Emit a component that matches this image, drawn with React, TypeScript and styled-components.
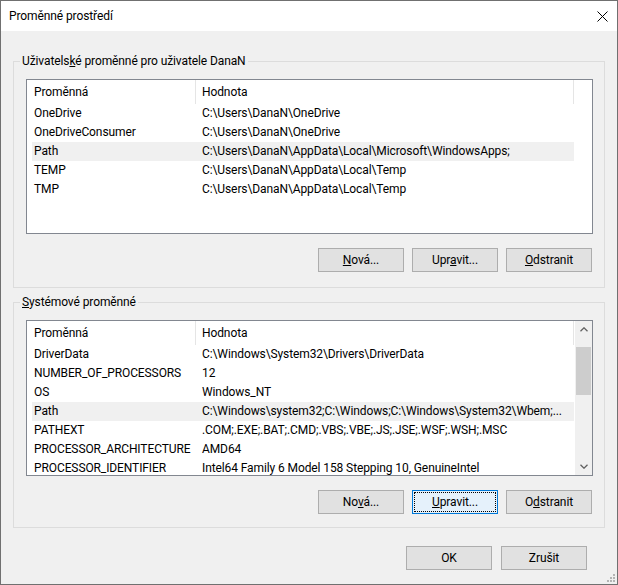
import React from 'react';
import styled, { createGlobalStyle, css } from 'styled-components';

interface EnvVar {
  name: string;
  value: string;
  selected?: boolean;
}

const userVars: EnvVar[] = [
  { name: 'OneDrive', value: 'C:\\Users\\DanaN\\OneDrive' },
  { name: 'OneDriveConsumer', value: 'C:\\Users\\DanaN\\OneDrive' },
  { name: 'Path', value: 'C:\\Users\\DanaN\\AppData\\Local\\Microsoft\\WindowsApps;', selected: true },
  { name: 'TEMP', value: 'C:\\Users\\DanaN\\AppData\\Local\\Temp' },
  { name: 'TMP', value: 'C:\\Users\\DanaN\\AppData\\Local\\Temp' },
];

const systemVars: EnvVar[] = [
  { name: 'DriverData', value: 'C:\\Windows\\System32\\Drivers\\DriverData' },
  { name: 'NUMBER_OF_PROCESSORS', value: '12' },
  { name: 'OS', value: 'Windows_NT' },
  { name: 'Path', value: 'C:\\Windows\\system32;C:\\Windows;C:\\Windows\\System32\\Wbem;...', selected: true },
  { name: 'PATHEXT', value: '.COM;.EXE;.BAT;.CMD;.VBS;.VBE;.JS;.JSE;.WSF;.WSH;.MSC' },
  { name: 'PROCESSOR_ARCHITECTURE', value: 'AMD64' },
  { name: 'PROCESSOR_IDENTIFIER', value: 'Intel64 Family 6 Model 158 Stepping 10, GenuineIntel' },
];

const GlobalStyle = createGlobalStyle`
  * { box-sizing: border-box; }
  html, body {
    margin: 0;
    padding: 0;
    background: #fff;
  }
  body {
    font-family: Roboto, "Liberation Sans", sans-serif;
    font-size: 12px;
    letter-spacing: -0.1px;
    color: #000;
  }
`;

const Window = styled.div`
  position: relative;
  width: 618px;
  height: 585px;
  border: 1px solid #707070;
  background: #f0f0f0;
  display: flex;
  flex-direction: column;
`;

const TitleBar = styled.div`
  flex: none;
  height: 30px;
  background: #fff;
  display: flex;
  align-items: center;
  justify-content: space-between;
  padding: 0 9px 0 8px;
`;

const Caption = styled.span`
  line-height: 16px;
`;

const Content = styled.div`
  flex: 1;
  display: flex;
  flex-direction: column;
  padding: 22px 12px 14px;
`;

const Group = styled.fieldset<{ $padBottom: number }>`
  margin: 0;
  min-width: 0;
  border: 1px solid #dcdcdc;
  padding: 10px 11px ${({ $padBottom }) => $padBottom}px 12px;

  & + & {
    margin-top: 6px;
  }
`;

const Legend = styled.legend`
  padding: 0 2px;
  margin-left: -6px;
  line-height: 16px;
`;

const ListView = styled.div<{ $height: number }>`
  height: ${({ $height }) => $height}px;
  background: #fff;
  border: 1px solid #828790;
  display: flex;
  overflow: hidden;
`;

const ListBody = styled.div`
  flex: 1;
  min-width: 0;
  overflow: hidden;
`;

const Header = styled.div`
  display: grid;
  grid-template-columns: 169px 378px;
  height: 24px;
`;

const HeaderCell = styled.div<{ $pad: number }>`
  padding-left: ${({ $pad }) => $pad}px;
  line-height: 24px;
  border-right: 1px solid #e5e5e5;
  white-space: nowrap;
`;

const Row = styled.div<{ $selected?: boolean }>`
  display: grid;
  grid-template-columns: 164px 378px;
  width: 542px;
  height: 19px;
  margin-left: 5px;
  line-height: 19px;
  background: ${({ $selected }) => ($selected ? '#f0f0f0' : 'transparent')};
`;

const Cell = styled.div<{ $pad: number }>`
  padding: 0 4px 0 ${({ $pad }) => $pad}px;
  white-space: nowrap;
  overflow: hidden;
  text-overflow: ellipsis;
`;

const ScrollBar = styled.div`
  flex: none;
  width: 17px;
  background: #f0f0f0;
  display: flex;
  flex-direction: column;
`;

const ScrollArrow = styled.div`
  flex: none;
  height: 17px;
  display: flex;
  align-items: center;
  justify-content: center;
`;

const ScrollTrack = styled.div`
  flex: 1;
  padding: 9px 1px 0;
`;

const ScrollThumb = styled.div`
  height: 48px;
  background: #cdcdcd;
`;

const ButtonRow = styled.div<{ $top: number; $gap: number; $right: number }>`
  display: flex;
  justify-content: flex-end;
  gap: ${({ $gap }) => $gap}px;
  margin-top: ${({ $top }) => $top}px;
  padding-right: ${({ $right }) => $right}px;
`;

const Button = styled.button<{ $focused?: boolean }>`
  position: relative;
  width: 86px;
  height: 24px;
  margin: 0;
  padding: 0;
  font: inherit;
  letter-spacing: inherit;
  color: #000;
  background: #e1e1e1;
  border: 1px solid #adadad;
  border-radius: 0;

  ${({ $focused }) =>
    $focused &&
    css`
      background: #e5f1fb;
      border-color: #0078d7;

      &::after {
        content: '';
        position: absolute;
        inset: 1px;
        border: 1px dotted #000;
      }
    `}
`;

const Grip = styled.svg`
  position: absolute;
  right: 1px;
  bottom: 1px;
`;

// "&" marks the access key, as in Win32 resource strings
const Mnemonic = ({ text }: { text: string }) => {
  const i = text.indexOf('&');
  if (i < 0) return <>{text}</>;
  return (
    <>
      {text.slice(0, i)}
      <u>{text[i + 1]}</u>
      {text.slice(i + 2)}
    </>
  );
};

const Chevron = ({ down }: { down?: boolean }) => (
  <svg width="8" height="5" viewBox="0 0 8 5">
    <polyline
      points={down ? '0.5,0.8 4,4.2 7.5,0.8' : '0.5,4.2 4,0.8 7.5,4.2'}
      fill="none"
      stroke="#606060"
      strokeWidth="1.3"
    />
  </svg>
);

const VarList = ({ items, height, scroll }: { items: EnvVar[]; height: number; scroll?: boolean }) => (
  <ListView $height={height}>
    <ListBody>
      <Header>
        <HeaderCell $pad={7}>Proměnná</HeaderCell>
        <HeaderCell $pad={6}>Hodnota</HeaderCell>
      </Header>
      {items.map((v) => (
        <Row key={v.name} $selected={v.selected}>
          <Cell $pad={2}>{v.name}</Cell>
          <Cell $pad={6}>{v.value}</Cell>
        </Row>
      ))}
    </ListBody>
    {scroll && (
      <ScrollBar>
        <ScrollArrow>
          <Chevron />
        </ScrollArrow>
        <ScrollTrack>
          <ScrollThumb />
        </ScrollTrack>
        <ScrollArrow>
          <Chevron down />
        </ScrollArrow>
      </ScrollBar>
    )}
  </ListView>
);

export default function App() {
  return (
    <>
      <GlobalStyle />
      <Window>
        <TitleBar>
          <Caption>Proměnné prostředí</Caption>
          <svg width="11" height="11" viewBox="0 0 11 11">
            <path d="M0.5 0.5L10.5 10.5M10.5 0.5L0.5 10.5" stroke="#000" strokeWidth="1" />
          </svg>
        </TitleBar>

        <Content>
          <Group $padBottom={15}>
            <Legend>
              <Mnemonic text="Uživatels&ké proměnné pro uživatele DanaN" />
            </Legend>
            <VarList items={userVars} height={155} />
            <ButtonRow $top={14} $gap={8} $right={1}>
              <Button><Mnemonic text="&Nová..." /></Button>
              <Button><Mnemonic text="Upr&avit..." /></Button>
              <Button><Mnemonic text="&Odstranit" /></Button>
            </ButtonRow>
          </Group>

          <Group $padBottom={13}>
            <Legend>
              <Mnemonic text="&Systémové proměnné" />
            </Legend>
            <VarList items={systemVars} height={156} scroll />
            <ButtonRow $top={14} $gap={8} $right={1}>
              <Button><Mnemonic text="No&vá..." /></Button>
              <Button $focused><Mnemonic text="&Upravit..." /></Button>
              <Button><Mnemonic text="O&dstranit" /></Button>
            </ButtonRow>
          </Group>

          <ButtonRow $top={18} $gap={9} $right={18}>
            <Button>OK</Button>
            <Button>Zrušit</Button>
          </ButtonRow>
        </Content>

        <Grip width="10" height="10" viewBox="0 0 10 10">
          <g fill="#b4b4b4">
            <rect x="7" y="1" width="2" height="2" />
            <rect x="4" y="4" width="2" height="2" />
            <rect x="7" y="4" width="2" height="2" />
            <rect x="1" y="7" width="2" height="2" />
            <rect x="4" y="7" width="2" height="2" />
            <rect x="7" y="7" width="2" height="2" />
          </g>
        </Grip>
      </Window>
    </>
  );
}
